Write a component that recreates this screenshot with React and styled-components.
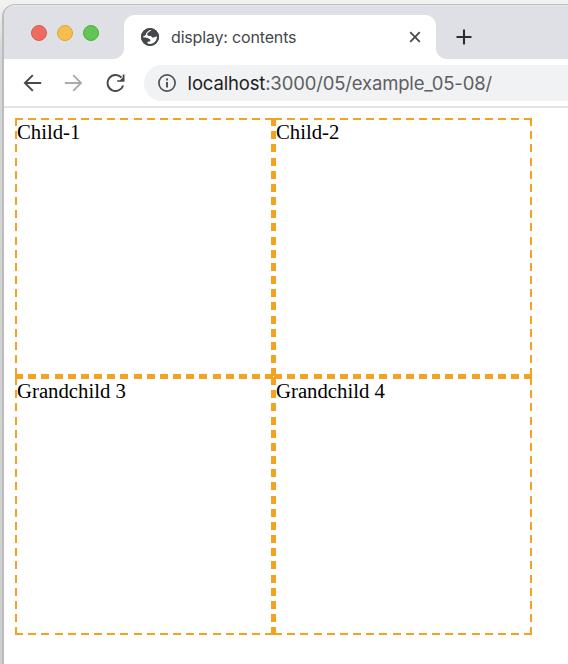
import React from 'react';
import styled, { createGlobalStyle } from 'styled-components';

const GlobalStyle = createGlobalStyle`
  * { box-sizing: border-box; }
  body { margin: 0; background: #f1f1f1; overflow: hidden; }
`;

const Desktop = styled.div`
  width: 568px;
  height: 664px;
  padding: 4px 0 0 2px;
  overflow: hidden;
  background: linear-gradient(to bottom, #f3f3f3 0, #d6d6d6 50px, #cfcfcf 100%);
  background-size: 4px 100%;
  background-repeat: no-repeat;
`;

const Window = styled.div`
  width: 640px;
  height: 700px;
  border: solid #bcbcbe;
  border-width: 1px 0 0 2px;
  border-radius: 13px 0 0 0;
  background: #fff;
  overflow: hidden;
`;

const TabStrip = styled.div`
  display: flex;
  align-items: flex-end;
  height: 54px;
  background: #dfe0e6;
  border-top: 1px solid #e8e8ed;
`;

const Lights = styled.div`
  display: flex;
  gap: 10px;
  align-self: flex-start;
  width: 120px;
  padding: 19px 0 0 27px;
`;

const Light = styled.span`
  width: 16px;
  height: 16px;
  border-radius: 50%;
  background: ${(p) => p.$fill};
  border: 1px solid ${(p) => p.$edge};
`;

const Tab = styled.div`
  position: relative;
  display: flex;
  align-items: center;
  width: 312px;
  height: 44px;
  padding: 0 14px 0 17px;
  border-radius: 11px 11px 0 0;
  background: #fff;
  &::before, &::after {
    content: '';
    position: absolute;
    bottom: 0;
    width: 11px;
    height: 11px;
  }
  &::before {
    left: -11px;
    background: radial-gradient(circle at 0 0, transparent 10.5px, #fff 11.5px);
  }
  &::after {
    right: -11px;
    background: radial-gradient(circle at 100% 0, transparent 10.5px, #fff 11.5px);
  }
`;

const TabTitle = styled.span`
  flex: 1;
  margin-left: 12px;
  font: 400 16px/20px Inter, sans-serif;
  letter-spacing: -0.17px;
  color: #45474b;
  white-space: nowrap;
`;

const NewTab = styled.div`
  display: flex;
  align-items: center;
  height: 44px;
  padding-left: 20px;
`;

const Toolbar = styled.div`
  display: flex;
  align-items: center;
  height: 49px;
  padding-left: 18px;
  border-bottom: 2px solid #e3e3e4;
  background: #fff;
`;

const NavIcons = styled.div`
  display: flex;
  gap: 22px;
  width: 122px;
`;

const AddressBar = styled.div`
  display: flex;
  align-items: center;
  gap: 12px;
  width: 500px;
  height: 36px;
  padding-left: 14px;
  border-radius: 18px;
  background: #f1f2f4;
`;

const Address = styled.span`
  font: 400 18.5px/24px Inter, sans-serif;
  letter-spacing: -0.16px;
  color: #5d5f62;
  white-space: nowrap;
`;

const Host = styled.span`
  color: #1d1e20;
`;

const Page = styled.main`
  padding: 10px 11px;
`;

const Grid = styled.div`
  display: grid;
  grid-template-columns: 259px 258px;
  grid-template-rows: 259px 258px;
  width: 517px;
`;

const dashes = (direction) =>
  `repeating-linear-gradient(${direction}, #f4a320 0 8px, transparent 8px 13.17px)`;

/* Dashed edges start with a full dash at each corner; $right and $bottom are edge widths. */
const Cell = styled.div`
  padding: 3px 2px;
  background:
    ${dashes('to right')} 0 0 / 100% 2px,
    ${dashes('to right')} 0 100% / 100% ${(p) => p.$bottom}px,
    ${dashes('to bottom')} 0 0 / 2px 100%,
    ${dashes('to bottom')} 100% 0 / ${(p) => p.$right}px 100%;
  background-repeat: no-repeat;
  font: 20.74px/23.3px 'Liberation Serif', serif;
  color: #000;
`;

const Icon = ({ size, children, ...rest }) => (
  <svg width={size} height={size} viewBox="0 0 24 24" fill="none" {...rest}>
    {children}
  </svg>
);

const Globe = () => (
  <svg width="18" height="18" viewBox="0 0 18 18">
    <circle cx="9" cy="9" r="9" fill="#46484d" />
    <path
      d="M10.8 1.8C9.8 3 8.6 3.3 7.7 4.3 6.6 5 6 5.6 6.2 6.6c.3 1.2 1.5 1.5 2.9 1.5 1 0 1.6.7 2 1.3.8.2 1.8.3 2.5-.2.8-.5 1.4-.7 2.6-.5-.1 4.4-3.4 7.6-7.3 7.5-.9 0-1.8-.2-2.6-.6l.2-1.7c.8-.3 2.1-.1 2.7-.8.5-.7.2-1.6-.6-2C7.2 10.4 6.1 9.5 4.4 9.5L1.8 9.3C1.7 5 4.7 1.8 9 1.8Z"
      fill="#fff"
    />
    <path d="M1 9C1 4 4.5 1 9.5 1 7.5 3.2 5 4.2 4.6 7.2L1 9Z" fill="#46484d" />
    <circle cx="9" cy="9" r="8" fill="none" stroke="#46484d" strokeWidth="2" />
  </svg>
);

const stroke = { stroke: '#46484d', strokeWidth: 2.3 };

export default function App() {
  return (
    <>
      <GlobalStyle />
      <Desktop>
        <Window>
          <TabStrip>
            <Lights>
              <Light $fill="#ed6b5f" $edge="#d95a4d" />
              <Light $fill="#f4bf4c" $edge="#dca637" />
              <Light $fill="#62c554" $edge="#4faf3e" />
            </Lights>
            <Tab>
              <Globe />
              <TabTitle>display: contents</TabTitle>
              <svg width="14" height="14" viewBox="0 0 14 14">
                <path d="M2.2 2.2l9.6 9.6M11.8 2.2l-9.6 9.6" stroke="#46484d" strokeWidth="1.8" />
              </svg>
            </Tab>
            <NewTab>
              <svg width="16" height="16" viewBox="0 0 16 16">
                <path d="M8 .5v15M.5 8h15" stroke="#2c2d31" strokeWidth="2.1" />
              </svg>
            </NewTab>
          </TabStrip>
          <Toolbar>
            <NavIcons>
              <Icon size={20}>
                <path d="M23 12H3M13 2.5 3.5 12l9.5 9.5" {...stroke} />
              </Icon>
              <Icon size={20}>
                <path d="M1 12h20M11 2.5l9.5 9.5-9.5 9.5" stroke="#a9abae" strokeWidth="2.2" />
              </Icon>
              <Icon size={20}>
                <path d="M18.5 5.4A9.6 9.6 0 1 0 20.6 15" {...stroke} />
                <path d="M22.2 1.8v8.6h-8.8V8.6h3.4L20 5.4V1.8Z" fill="#46484d" />
              </Icon>
            </NavIcons>
            <AddressBar>
              <svg width="18" height="18" viewBox="0 0 18 18" fill="none">
                <circle cx="9" cy="9" r="8.1" stroke="#505257" strokeWidth="1.7" />
                <path d="M9 8v5.4M9 4.4v2.1" stroke="#505257" strokeWidth="2" />
              </svg>
              <Address>
                <Host>localhost</Host>:3000/05/example_05-08/
              </Address>
            </AddressBar>
          </Toolbar>
          <Page>
            <Grid>
              <Cell $right={3} $bottom={3}>Child-1</Cell>
              <Cell $right={2} $bottom={3}>Child-2</Cell>
              <Cell $right={3} $bottom={2}>Grandchild 3</Cell>
              <Cell $right={2} $bottom={2}>Grandchild 4</Cell>
            </Grid>
          </Page>
        </Window>
      </Desktop>
    </>
  );
}
